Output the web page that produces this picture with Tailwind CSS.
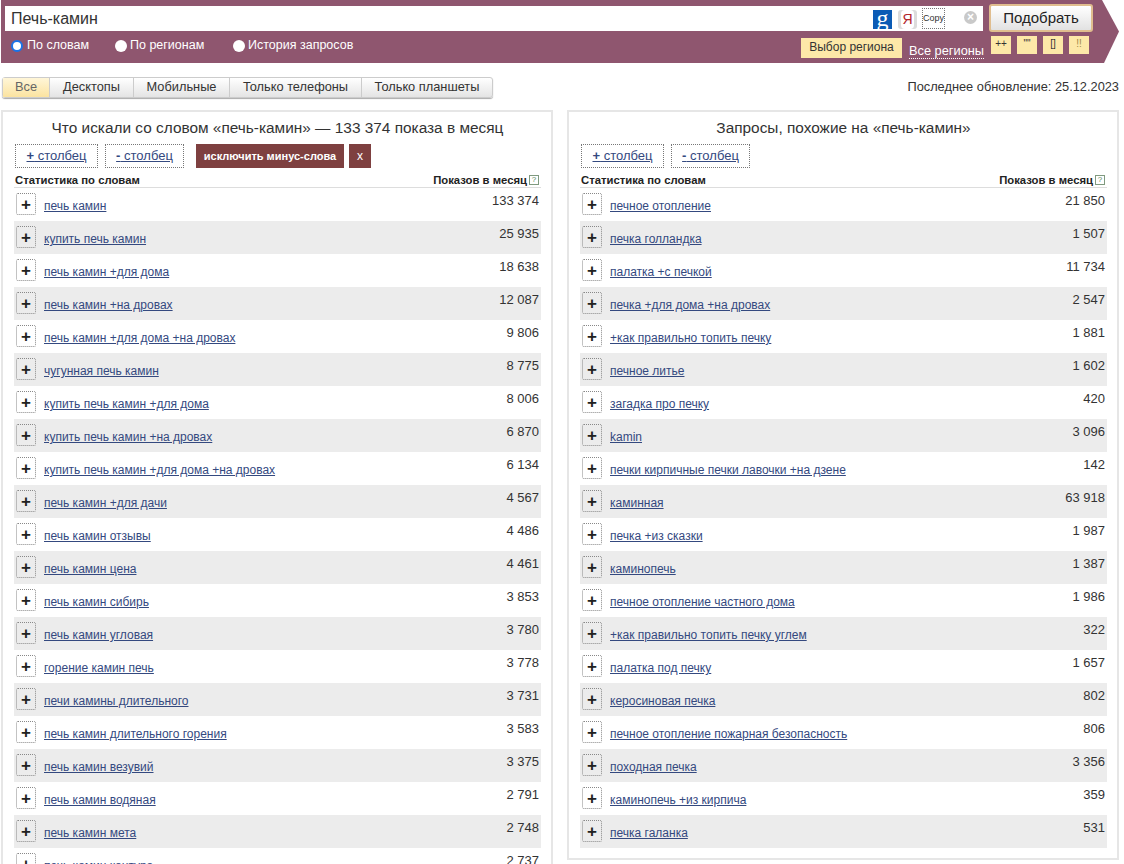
<!DOCTYPE html>
<html lang="ru">
<head>
    <meta charset="UTF-8">
    <title>Подбор слов</title>
    <script src="https://cdn.jsdelivr.net/npm/@tailwindcss/browser@4"></script>
</head>
<body class="bg-white text-[#222] font-['Liberation_Sans',Arial,sans-serif] h-[864px] overflow-hidden">

    <!-- search bar -->
    <div class="ml-px w-[1118px] h-[63px] bg-[#8f566f] [clip-path:polygon(0_0,1101px_0,100%_50%,1103px_100%,0_100%)] pt-[6px] pl-[4px]">
        <div class="flex items-start">
            <div class="w-[978px] h-[25px] bg-white flex items-center pl-[6px] text-[16px] text-[#333] relative">
                Печь-камин
                <div class="absolute left-[868px] top-[4px] w-[19px] h-[19px] bg-[#0b5bb5] text-white text-[24px] leading-[16px] text-center font-['Liberation_Serif',serif]">g</div>
                <div class="absolute left-[893px] top-[4px] w-[19px] h-[19px] bg-[#dcdcdc] rounded-[3px] flex items-center justify-center"><span class="bg-white w-[13px] h-[19px] rounded-[4px] text-center text-[#b3262b] text-[14px] leading-[19px]">Я</span></div>
                <div class="absolute left-[917px] top-[2px] w-[23px] h-[21px] border border-dotted border-[#777] text-[9px] leading-[19px] whitespace-nowrap">Copy</div>
                <div class="absolute left-[959px] top-[5px] w-[13px] h-[13px] rounded-full bg-[#c9c9c9] text-white text-[12px] font-bold leading-[13px] text-center">×</div>
            </div>
            <button class="ml-[6px] -mt-[2px] w-[104px] h-[28px] rounded-[3px] border-2 border-[#e0bd8e] bg-gradient-to-b from-white to-[#e2e2e2] text-[15px] text-[#222]">Подобрать</button>
        </div>
        <div class="flex items-start h-[26px] text-white text-[12.5px]">
            <label class="flex items-center gap-[4px] w-[110px] pl-[6px] h-[15px] mt-[6px]">
                <span class="w-[12px] h-[12px] rounded-full bg-white border-[2px] border-[#1a73e8]"></span>По словам
            </label>
            <label class="flex items-center gap-[3px] w-[118px] h-[15px] mt-[6px]">
                <span class="w-[12px] h-[12px] rounded-full bg-white"></span>По регионам
            </label>
            <label class="flex items-center gap-[3px] w-[200px] h-[15px] mt-[6px]">
                <span class="w-[12px] h-[12px] rounded-full bg-white"></span>История запросов
            </label>
            <div class="ml-[368px] mt-[6px] w-[101px] h-[20px] bg-[#fde8a8] text-[#333] text-[12px] leading-[19px] text-center">Выбор региона</div>
            <div class="ml-[7px] mt-[11px] h-[16px] text-[12.8px] leading-[15px] border-b border-dotted border-white whitespace-nowrap">Все регионы</div>
            <div class="ml-[7px] mt-[4px] flex gap-[6px] text-[#333] text-[10px] text-center leading-[16px]">
                <span class="w-[20px] h-[18px] bg-[#fde8a8]">++</span>
                <span class="w-[20px] h-[18px] bg-[#fde8a8]">""</span>
                <span class="w-[20px] h-[18px] bg-[#fde8a8]">[]</span>
                <span class="w-[20px] h-[18px] bg-[#fde8a8] text-[#a08a4a]">!!</span>
            </div>
        </div>
    </div>

    <!-- device tabs -->
    <div class="flex justify-between items-center mt-[13px] pl-[2px] pr-[5px] h-[22px]">
        <div class="flex h-[21px] text-[12.8px] text-[#333] border border-[#ccc] rounded-[3px] shadow-[0_1px_1px_#aaa] bg-gradient-to-b from-white to-[#e4e4e4]">
            <span class="w-[47px] flex items-center justify-center bg-gradient-to-b from-[#fff6d8] to-[#fbe3a0] text-[#666] border-r border-[#ccc]">Все</span>
            <span class="w-[84px] flex items-center justify-center border-r border-[#ccc]">Десктопы</span>
            <span class="w-[96px] flex items-center justify-center border-r border-[#ccc]">Мобильные</span>
            <span class="w-[132px] flex items-center justify-center border-r border-[#ccc]">Только телефоны</span>
            <span class="w-[130px] flex items-center justify-center">Только планшеты</span>
        </div>
        <div class="text-[12.8px] text-[#333]">Последнее обновление: 25.12.2023</div>
    </div>

    <!-- panels -->
    <div class="flex items-start gap-[14px] mt-[12px] pl-px">
        <div id="left" class="w-[552px] h-[780px] border-2 border-[#e6e6e6] pl-[11px] pr-[10px] overflow-hidden">
            <div class="h-[32px] pt-[7px] text-center text-[15.4px] leading-[17px] text-[#333] whitespace-nowrap">Что искали со словом «печь-камин» — 133 374 показа в месяц</div>
            <div class="flex items-center gap-[7px] h-[24px] pl-px text-[13px] text-[#34497f]">
                <a class="w-[83px] h-[24px] border border-dotted border-[#777] text-center leading-[22px] underline"><b>+</b> столбец</a>
                <a class="w-[79px] h-[24px] border border-dotted border-[#777] text-center leading-[22px] underline"><b>-</b> столбец</a>
                <span class="ml-[5px] w-[148px] h-[24px] bg-[#7e4040] text-white text-[11px] font-bold text-center leading-[24px]">исключить минус-слова</span>
                <span class="-ml-[2px] w-[22px] h-[24px] bg-[#7e4040] text-white text-[12px] text-center leading-[24px]">x</span>
            </div>
            <div class="flex justify-between items-end h-[20px] border-b border-[#ddd] text-[11.3px] leading-[14px] font-bold text-[#222]">
                <span class="pl-px">Статистика по словам</span>
                <span class="flex items-center gap-[2px] mr-[2px]">Показов в месяц<span class="w-[10px] h-[10px] border border-[#7f9a7f] text-[#5a8a5a] text-[8px] leading-[8px] text-center font-normal">?</span></span>
            </div>
            <div id="left-rows"></div>
        </div>
        <div id="right" class="w-[552px] h-[750px] border-2 border-[#e6e6e6] pl-[11px] pr-[10px] overflow-hidden">
            <div class="h-[32px] pt-[7px] text-center text-[15.4px] leading-[17px] text-[#333]">Запросы, похожие на «печь-камин»</div>
            <div class="flex items-center gap-[7px] h-[24px] pl-px text-[13px] text-[#34497f]">
                <a class="w-[83px] h-[24px] border border-dotted border-[#777] text-center leading-[22px] underline"><b>+</b> столбец</a>
                <a class="w-[79px] h-[24px] border border-dotted border-[#777] text-center leading-[22px] underline"><b>-</b> столбец</a>
            </div>
            <div class="flex justify-between items-end h-[20px] border-b border-[#ddd] text-[11.3px] leading-[14px] font-bold text-[#222]">
                <span class="pl-px">Статистика по словам</span>
                <span class="flex items-center gap-[2px] mr-[2px]">Показов в месяц<span class="w-[10px] h-[10px] border border-[#7f9a7f] text-[#5a8a5a] text-[8px] leading-[8px] text-center font-normal">?</span></span>
            </div>
            <div id="right-rows"></div>
        </div>
    </div>

    <script>
        const leftRows = [
            ['печь камин', '133 374'], ['купить печь камин', '25 935'], ['печь камин +для дома', '18 638'],
            ['печь камин +на дровах', '12 087'], ['печь камин +для дома +на дровах', '9 806'], ['чугунная печь камин', '8 775'],
            ['купить печь камин +для дома', '8 006'], ['купить печь камин +на дровах', '6 870'], ['купить печь камин +для дома +на дровах', '6 134'],
            ['печь камин +для дачи', '4 567'], ['печь камин отзывы', '4 486'], ['печь камин цена', '4 461'],
            ['печь камин сибирь', '3 853'], ['печь камин угловая', '3 780'], ['горение камин печь', '3 778'],
            ['печи камины длительного', '3 731'], ['печь камин длительного горения', '3 583'], ['печь камин везувий', '3 375'],
            ['печь камин водяная', '2 791'], ['печь камин мета', '2 748'], ['печь камин контура', '2 737']
        ];
        const rightRows = [
            ['печное отопление', '21 850'], ['печка голландка', '1 507'], ['палатка +с печкой', '11 734'],
            ['печка +для дома +на дровах', '2 547'], ['+как правильно топить печку', '1 881'], ['печное литье', '1 602'],
            ['загадка про печку', '420'], ['kamin', '3 096'], ['печки кирпичные печки лавочки +на дзене', '142'],
            ['каминная', '63 918'], ['печка +из сказки', '1 987'], ['каминопечь', '1 387'],
            ['печное отопление частного дома', '1 986'], ['+как правильно топить печку углем', '322'], ['палатка под печку', '1 657'],
            ['керосиновая печка', '802'], ['печное отопление пожарная безопасность', '806'], ['походная печка', '3 356'],
            ['каминопечь +из кирпича', '359'], ['печка галанка', '531']
        ];

        function renderRows(id, rows) {
            document.getElementById(id).innerHTML = rows.map((row, i) => `
                <div class="flex h-[33px] ${i % 2 ? 'bg-[#ececec]' : 'bg-white'}">
                    <span class="ml-[2px] mt-[5px] w-[20px] h-[22px] border border-dotted border-[#888] rounded-[2px] flex items-center justify-center text-[17px] leading-none text-[#222] [font-weight:600]">+</span>
                    <a class="ml-[8px] mt-[11px] h-[15px] text-[12px] leading-[15px] text-[#34497f] underline">${row[0]}</a>
                    <span class="ml-auto mr-[2px] mt-[4px] text-[13px] leading-[17px] text-[#333]">${row[1]}</span>
                </div>`).join('');
        }
        renderRows('left-rows', leftRows);
        renderRows('right-rows', rightRows);
    </script>
</body>
</html>
